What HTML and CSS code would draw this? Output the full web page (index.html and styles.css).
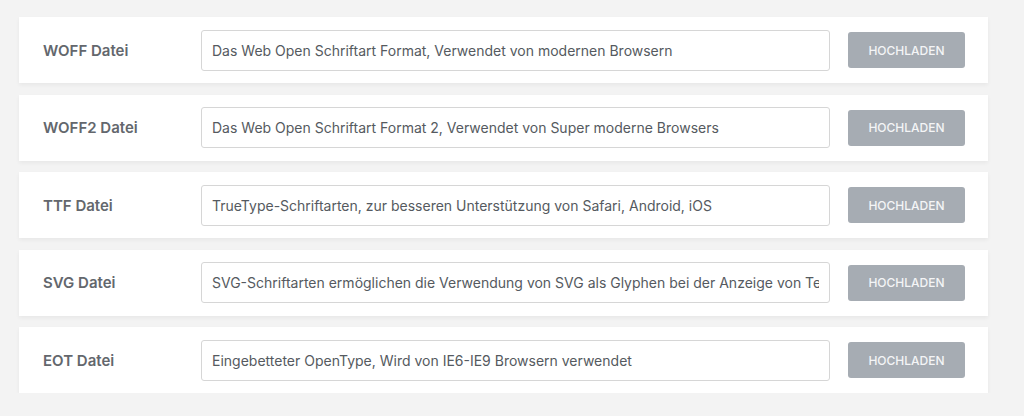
FILE: index.html
```html
<!DOCTYPE html>
<html lang="de">
<head>
    <meta charset="UTF-8">
    <meta name="viewport" content="width=device-width, initial-scale=1.0">
    <title>Schriftarten</title>
    <link rel="stylesheet" href="styles.css">
</head>
<body>
    <div class="container">
        <div class="zeile">
            <label class="titel" for="woff">WOFF Datei</label>
            <input class="feld" type="text" id="woff" value="Das Web Open Schriftart Format, Verwendet von modernen Browsern">
            <button class="hochladen">HOCHLADEN</button>
        </div>
        <div class="zeile">
            <label class="titel" for="woff2">WOFF2 Datei</label>
            <input class="feld" type="text" id="woff2" value="Das Web Open Schriftart Format 2, Verwendet von Super moderne Browsers">
            <button class="hochladen">HOCHLADEN</button>
        </div>
        <div class="zeile">
            <label class="titel" for="ttf">TTF Datei</label>
            <input class="feld" type="text" id="ttf" value="TrueType-Schriftarten, zur besseren Unterstützung von Safari, Android, iOS">
            <button class="hochladen">HOCHLADEN</button>
        </div>
        <div class="zeile">
            <label class="titel" for="svg">SVG Datei</label>
            <input class="feld" type="text" id="svg" value="SVG-Schriftarten ermöglichen die Verwendung von SVG als Glyphen bei der Anzeige von Text">
            <button class="hochladen">HOCHLADEN</button>
        </div>
        <div class="zeile">
            <label class="titel" for="eot">EOT Datei</label>
            <input class="feld" type="text" id="eot" value="Eingebetteter OpenType, Wird von IE6-IE9 Browsern verwendet">
            <button class="hochladen">HOCHLADEN</button>
        </div>
    </div>
</body>
</html>
```

FILE: styles.css
```css
body {
    margin: 0;
    background-color: #f3f3f3;
    font-family: Inter, "Liberation Sans", Arial, sans-serif;
}
.container {
    display: flex;
    flex-direction: column;
    gap: 11.5px;
    width: 969px;
    padding: 17px 0 0 19px;
}
.zeile {
    display: flex;
    align-items: center;
    height: 66px;
    padding: 0 23px 0 24px;
    background-color: #fff;
    box-shadow: 0 2px 4px rgba(0, 0, 0, 0.05);
}
.titel {
    width: 158px;
    flex-shrink: 0;
    font-size: 15px;
    font-weight: 600;
    color: #63676d;
}
.feld {
    width: 629px;
    height: 41px;
    box-sizing: border-box;
    padding: 0 10px;
    border: 1px solid #d6d6d6;
    border-radius: 3px;
    font-family: Inter, "Liberation Sans", Arial, sans-serif;
    font-size: 14px;
    color: #555a60;
    background-color: #fff;
    outline: none;
}
.hochladen {
    width: 117px;
    height: 36px;
    margin-left: 18px;
    border: none;
    border-radius: 3px;
    background-color: #a6acb3;
    color: #f4f5f6;
    font-family: Inter, "Liberation Sans", sans-serif;
    font-size: 12px;
    font-weight: 500;
}
```
